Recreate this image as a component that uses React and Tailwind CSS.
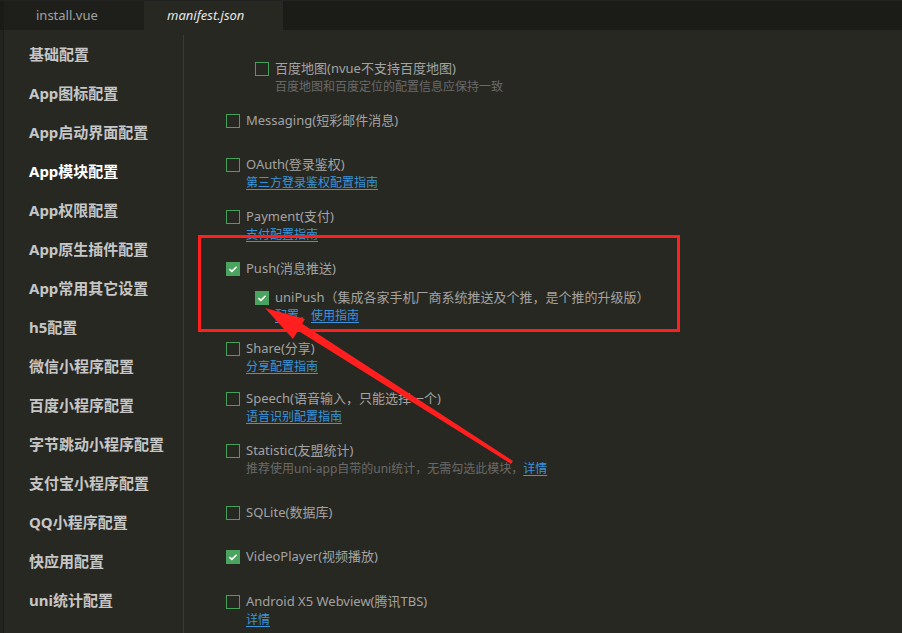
import React from "react";

const menu = [
  "基础配置",
  "App图标配置",
  "App启动界面配置",
  "App模块配置",
  "App权限配置",
  "App原生插件配置",
  "App常用其它设置",
  "h5配置",
  "微信小程序配置",
  "百度小程序配置",
  "字节跳动小程序配置",
  "支付宝小程序配置",
  "QQ小程序配置",
  "快应用配置",
  "uni统计配置",
];

const Box = ({ checked }) =>
  checked ? (
    <span className="w-[14px] h-[14px] bg-[#4aa35e] flex items-center justify-center shrink-0">
      <svg width="10" height="8" viewBox="0 0 10 8">
        <path d="M1.4 4.1 L3.9 6.4 L8.6 1.7" stroke="#fff" strokeWidth="1.6" fill="none" />
      </svg>
    </span>
  ) : (
    <span className="w-[14px] h-[14px] border border-[#45a05a] shrink-0" />
  );

const Row = ({ checked, children }) => (
  <div className="flex items-center gap-[6px] h-[19px] text-[13px] text-[#a3a3a3]">
    <Box checked={checked} />
    <span>{children}</span>
  </div>
);

const Link = ({ children }) => (
  <span className="text-[#3a95de] underline underline-offset-2">{children}</span>
);

const Sub = ({ children }) => (
  <div className="pl-[20px] h-[18px] leading-[18px] text-[12px] text-[#6a6a6a]">{children}</div>
);

const Item = ({ checked, label, sub, pb = "pb-[15px]", minH = "min-h-[44px]" }) => (
  <div className={`${minH} ${pb}`}>
    <Row checked={checked}>{label}</Row>
    {sub && <Sub>{sub}</Sub>}
  </div>
);

const App = () => {
  return (
    <div className="w-[902px] h-[633px] overflow-hidden bg-[#272822] relative font-['Noto_Sans','Noto_Sans_CJK_SC',sans-serif]">
      {/* tabs */}
      <div className="h-[30px] flex bg-[#1b1c18] border-t border-[#222320]">
        <div className="w-[4px] bg-[#1a1b17]" />
        <div className="w-[140px] flex items-center pl-[32px] bg-[#1e1f1b] text-[13px] text-[#a2a2a2]">
          install.vue
        </div>
        <div className="w-[139px] flex items-center pl-[23px] bg-[#272822] text-[13px] italic text-[#e6e6e6]">
          manifest.json
        </div>
      </div>

      <div className="flex h-[603px]">
        {/* sidebar */}
        <div className="w-[4px] bg-[#22231f] border-r border-[#1a1b17]" />
        <div className="w-[180px] border-r border-[#3a3b35] mt-[5px]">
          {menu.map((m) => (
            <div
              key={m}
              className={`h-[39px] flex items-center pl-[25px] text-[15px] font-bold ${
                m === "App模块配置" ? "text-white" : "text-[#c6c6c6]"
              }`}
            >
              {m}
            </div>
          ))}
        </div>

        {/* content */}
        <div className="flex-1 pl-[42px] pt-[29px]">
          <div className="pl-[29px] pb-[15px]">
            <Row>百度地图(nvue不支持百度地图)</Row>
            <Sub>百度地图和百度定位的配置信息应保持一致</Sub>
          </div>
          <Item label="Messaging(短彩邮件消息)" />
          <Item label="OAuth(登录鉴权)" sub={<Link>第三方登录鉴权配置指南</Link>} />
          <Item label="Payment(支付)" sub={<Link>支付配置指南</Link>} />
          <div className="pb-[15px]">
            <Row checked>Push(消息推送)</Row>
            <div className="pl-[29px] mt-[10px]">
              <Row checked>uniPush（集成各家手机厂商系统推送及个推，是个推的升级版）</Row>
              <div className="pl-[20px] h-[17px] leading-[17px] text-[12px] text-[#6a6a6a]">
                <Link>配置</Link>，<Link>使用指南</Link>
              </div>
            </div>
          </div>
          <Item label="Share(分享)" sub={<Link>分享配置指南</Link>} pb="pb-[13px]" />
          <Item label="Speech(语音输入，只能选择一个)" sub={<Link>语音识别配置指南</Link>} />
          <Item
            label="Statistic(友盟统计)"
            sub={
              <>
                推荐使用uni-app自带的uni统计，无需勾选此模块，<Link>详情</Link>
              </>
            }
            pb="pb-[25px]"
          />
          <Item label="SQLite(数据库)" />
          <Item checked label="VideoPlayer(视频播放)" minH="min-h-[45px]" />
          <Item label="Android X5 Webview(腾讯TBS)" sub={<Link>详情</Link>} />
        </div>
      </div>

      {/* annotation */}
      <div className="absolute left-[198px] top-[235px] w-[482px] h-[97px] border-[3px] border-[#ff1f1f] pointer-events-none" />
      <svg className="absolute left-0 top-0 pointer-events-none" width="902" height="633">
        <polygon points="511,464 513,461 301,323 297,330" fill="#ff1f1f" />
        <polygon points="265,308 305,319 293,339" fill="#ff1f1f" />
      </svg>
    </div>
  );
};

export default App;
